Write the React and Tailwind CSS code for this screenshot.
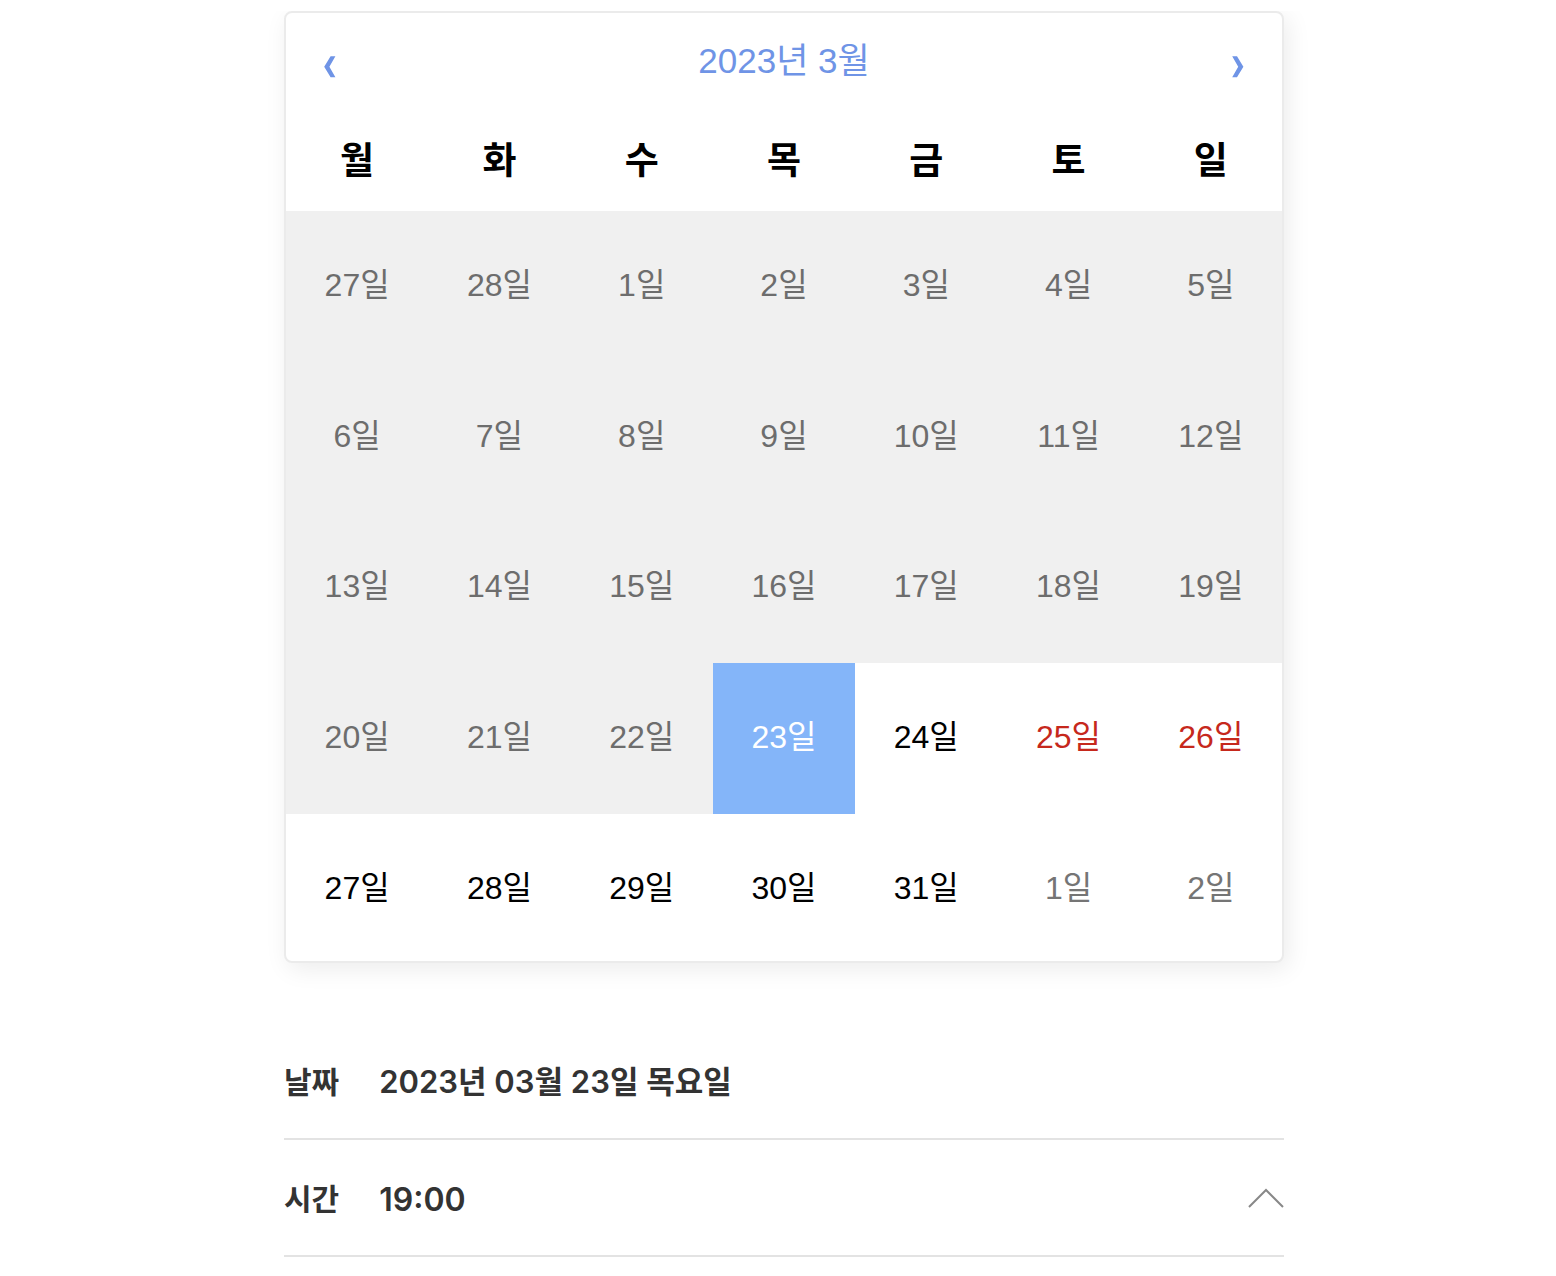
const weekdays = ['월', '화', '수', '목', '금', '토', '일'];

const weeks = [
  [27, 28, 1, 2, 3, 4, 5],
  [6, 7, 8, 9, 10, 11, 12],
  [13, 14, 15, 16, 17, 18, 19],
  [20, 21, 22, 23, 24, 25, 26],
  [27, 28, 29, 30, 31, 1, 2],
];

const rowHeights = ['h-[151px] pb-1', 'h-[151px] pb-1', 'h-[150px] pb-1', 'h-[151px] pb-1', 'h-[147px]'];

function dayStyle(week, col) {
  if (week < 3 || (week === 3 && col < 3)) return 'bg-[#f0f0f0] text-[#6d6d6d]';
  if (week === 3 && col === 3) return 'bg-[#84b5f9] text-white';
  if (week === 4 && col > 4) return 'text-[#757575]';
  if (col > 4) return 'text-[#c6281c]';
  return 'text-black';
}

function Arrow({ points }) {
  return (
    <svg viewBox="0 0 12 22" className="h-[22px] w-3 fill-current" aria-hidden="true">
      <polygon points={points} />
    </svg>
  );
}

function Calendar() {
  return (
    <section className="overflow-hidden rounded-lg border-2 border-[#ebebeb] bg-white shadow-[4px_6px_24px_rgba(0,0,0,0.08)]">
      <header className="flex h-24 items-center text-[#6f94e6]">
        <button aria-label="이전 달" className="flex h-24 w-[88px] items-center justify-center pt-3">
          <Arrow points="6.6,0.2 11.4,0.2 5.4,10.7 11.4,21.2 6.6,21.2 0.2,10.7" />
        </button>
        <button className="h-24 flex-1 text-[35px]">2023년 3월</button>
        <button aria-label="다음 달" className="flex h-24 w-[88px] items-center justify-center pt-3">
          <Arrow points="5,0.2 0.2,0.2 6.2,10.7 0.2,21.2 5,21.2 11.4,10.7" />
        </button>
      </header>
      <table className="w-full table-fixed border-collapse">
        <thead>
          <tr className="h-[102px]">
            {weekdays.map((d) => (
              <th key={d} scope="col" className="p-0 pt-1 text-[37px] leading-10 font-bold text-black">{d}</th>
            ))}
          </tr>
        </thead>
        <tbody>
          {weeks.map((week, w) => (
            <tr key={w}>
              {week.map((day, c) => (
                <td key={c} className="p-0">
                  <button className={`block w-full text-[32px] ${rowHeights[w]} ${dayStyle(w, c)}`}>
                    {day}일
                  </button>
                </td>
              ))}
            </tr>
          ))}
        </tbody>
      </table>
    </section>
  );
}

const rowStyle =
  "flex h-[117px] w-full items-center gap-10 border-b-2 border-[#e3e3e3] text-left font-['Inter','Noto_Sans_CJK_KR',sans-serif] font-semibold text-[#333333]";

export default function App() {
  return (
    <main className="mt-[11px] overflow-hidden pl-3 font-['Liberation_Sans','Noto_Sans_CJK_KR',sans-serif]">
      <div className="mx-auto max-w-[1000px] pb-5">
        <Calendar />
        <div className="mt-[60px]">
          <div className={rowStyle}>
            <span className="pt-1 text-[30px]">날짜</span>
            <span className="pt-1 text-[31px]">2023년 03월 23일 목요일</span>
          </div>
          <button className={rowStyle} aria-expanded="true">
            <span className="pt-1 text-[30px]">시간</span>
            <span className="pt-1 text-[32px]">19:00</span>
            <svg viewBox="0 0 36 20" className="ml-auto h-5 w-9 fill-none stroke-[#888888] stroke-2" aria-hidden="true">
              <path d="M1 19 18 2 35 19" />
            </svg>
          </button>
        </div>
      </div>
    </main>
  );
}
